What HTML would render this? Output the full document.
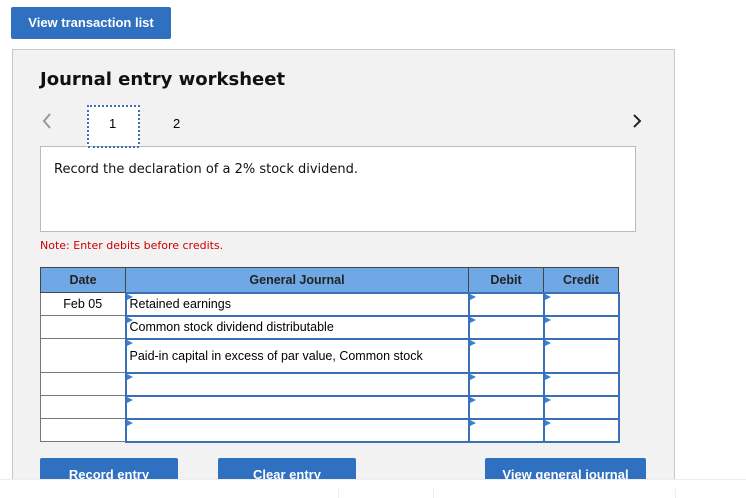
<!DOCTYPE html>
<html><head><style>
*{margin:0;padding:0;box-sizing:border-box}
body{width:746px;height:498px;background:#fff;font-family:"Liberation Sans",Arial,sans-serif;position:relative;overflow:hidden}
.abs{position:absolute}
.btn{position:absolute;background:#2f70c0;color:#fff;font-weight:bold;font-size:13px;text-align:center;border-radius:2px}
#panel{left:12px;top:49px;width:663px;height:440px;background:#f2f2f2;border:1px solid #c8c8c8}
.v{font-family:"DejaVu Sans",sans-serif}
table{position:absolute;left:40px;top:267px;border-collapse:collapse;font-size:12.5px}
td,th{border:1.5px solid #777;padding:0}
th{background:#6fa8e4;height:25px;font-weight:bold;color:#222;border-color:#444}
td{background:#fff;height:23px;position:relative}
td.in{border:2px solid #3a70b8;padding-left:3px}
td.in:before{content:"";position:absolute;left:0;top:0;border-left:6px solid #3a7fd0;border-top:3px solid transparent;border-bottom:3px solid transparent}
</style></head><body>
<div class="btn" style="left:11px;top:7px;width:160px;height:32px;line-height:32px;font-size:13px">View transaction list</div>
<div id="panel" class="abs"></div>
<div class="abs v" style="left:40px;top:69px;font-size:18px;font-weight:bold;color:#111">Journal entry worksheet</div>
<svg class="abs" style="left:40px;top:112px" width="14" height="18"><path d="M10 2 L4 9 L10 16" fill="none" stroke="#999" stroke-width="2"/></svg>
<svg class="abs" style="left:630px;top:112px" width="14" height="18"><path d="M4 3 L10 9 L4 15" fill="none" stroke="#222" stroke-width="2"/></svg>
<div class="abs" style="left:87px;top:105px;width:53px;height:43px;background:#fff;border:2px dotted #3a70c0;border-bottom:none"></div>
<div class="abs" style="left:109px;top:116px;font-size:13px">1</div>
<div class="abs" style="left:173px;top:116px;font-size:13px">2</div>
<div class="abs" style="left:40px;top:146px;width:596px;height:86px;background:#fff;border:1px solid #bbb"></div>
<div class="abs" style="left:88px;top:146px;width:51px;height:2px;border-bottom:2px dotted #3a70c0"></div>
<div class="abs v" style="left:54px;top:162px;font-size:13px;color:#111">Record the declaration of a 2% stock dividend.</div>
<div class="abs v" style="left:40px;top:239px;font-size:11px;color:#c00">Note: Enter debits before credits.</div>
<table>
<tr><th style="width:85px">Date</th><th style="width:343px">General Journal</th><th style="width:75px">Debit</th><th style="width:75px">Credit</th></tr>
<tr><td style="text-align:center">Feb 05</td><td class="in">Retained earnings</td><td class="in"></td><td class="in"></td></tr>
<tr><td></td><td class="in">Common stock dividend distributable</td><td class="in"></td><td class="in"></td></tr>
<tr><td style="height:34px"></td><td class="in">Paid-in capital in excess of par value, Common stock</td><td class="in"></td><td class="in"></td></tr>
<tr><td></td><td class="in"></td><td class="in"></td><td class="in"></td></tr>
<tr><td></td><td class="in"></td><td class="in"></td><td class="in"></td></tr>
<tr><td></td><td class="in"></td><td class="in"></td><td class="in"></td></tr>
</table>
<div class="btn" style="left:40px;top:458px;width:138px;height:40px;padding-top:9px">Record entry</div>
<div class="btn" style="left:218px;top:458px;width:138px;height:40px;padding-top:9px">Clear entry</div>
<div class="btn" style="left:485px;top:458px;width:161px;height:40px;padding-top:9px">View general journal</div>
<div class="abs" style="left:0;top:479px;width:746px;height:19px;background:#fff;border-top:1px solid #eee"></div>
<div class="abs" style="left:338px;top:489px;width:1px;height:9px;background:#eee"></div>
<div class="abs" style="left:433px;top:489px;width:1px;height:9px;background:#eee"></div>
<div class="abs" style="left:675px;top:489px;width:1px;height:9px;background:#eee"></div>
</body></html>
